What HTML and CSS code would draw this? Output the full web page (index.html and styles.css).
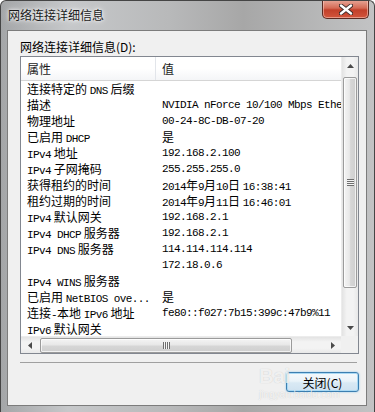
FILE: index.html
```html
<!DOCTYPE html>
<html lang="zh-CN">
<head>
    <meta charset="UTF-8">
    <meta name="viewport" content="width=device-width, initial-scale=1.0">
    <title>网络连接详细信息</title>
    <link rel="stylesheet" href="styles.css">
</head>
<body>

    <div class="window">
        <div class="titlebar">
            <span class="title">网络连接详细信息</span>
            <button class="close" aria-label="关闭">
                <svg width="14" height="11" viewBox="0 0 14 11">
                    <path d="M2 1.5 L12 9.5 M12 1.5 L2 9.5" stroke="#3a2a28" stroke-width="4.2" stroke-linecap="round"/>
                    <path d="M2 1.5 L12 9.5 M12 1.5 L2 9.5" stroke="#fff" stroke-width="2.4" stroke-linecap="round"/>
                </svg>
            </button>
        </div>

        <div class="client">
            <div class="label">网络连接详细信息(D):</div>

            <div class="listbox">
                <div class="list">
                    <div class="head">
                        <div class="col1">属性</div>
                        <div class="col2">值</div>
                    </div>
                    <div class="row"><div class="col1">连接特定的 <span class="en">DNS</span> 后缀</div><div class="col2"></div></div>
                    <div class="row"><div class="col1">描述</div><div class="col2 en">NVIDIA nForce 10/100 Mbps Ethernet</div></div>
                    <div class="row"><div class="col1">物理地址</div><div class="col2 en">00-24-8C-DB-07-20</div></div>
                    <div class="row"><div class="col1">已启用 <span class="en">DHCP</span></div><div class="col2">是</div></div>
                    <div class="row"><div class="col1"><span class="en">IPv4</span> 地址</div><div class="col2 en">192.168.2.100</div></div>
                    <div class="row"><div class="col1"><span class="en">IPv4</span> 子网掩码</div><div class="col2 en">255.255.255.0</div></div>
                    <div class="row"><div class="col1">获得租约的时间</div><div class="col2"><span class="en">2014</span>年<span class="en">9</span>月<span class="en">10</span>日 <span class="en">16:38:41</span></div></div>
                    <div class="row"><div class="col1">租约过期的时间</div><div class="col2"><span class="en">2014</span>年<span class="en">9</span>月<span class="en">11</span>日 <span class="en">16:46:01</span></div></div>
                    <div class="row"><div class="col1"><span class="en">IPv4</span> 默认网关</div><div class="col2 en">192.168.2.1</div></div>
                    <div class="row"><div class="col1"><span class="en">IPv4 DHCP</span> 服务器</div><div class="col2 en">192.168.2.1</div></div>
                    <div class="row"><div class="col1"><span class="en">IPv4 DNS</span> 服务器</div><div class="col2 en">114.114.114.114</div></div>
                    <div class="row"><div class="col1"></div><div class="col2 en">172.18.0.6</div></div>
                    <div class="row"><div class="col1"><span class="en">IPv4 WINS</span> 服务器</div><div class="col2"></div></div>
                    <div class="row"><div class="col1">已启用 <span class="en">NetBIOS ove...</span></div><div class="col2">是</div></div>
                    <div class="row"><div class="col1">连接<span class="en">-</span>本地 <span class="en">IPv6</span> 地址</div><div class="col2 en">fe80::f027:7b15:399c:47b9%11</div></div>
                    <div class="row"><div class="col1"><span class="en">IPv6</span> 默认网关</div><div class="col2"></div></div>
                </div>

                <div class="vscroll">
                    <div class="arrow">
                        <svg width="7" height="4" viewBox="0 0 7 4"><polygon points="0,4 7,4 3.5,0" fill="#4a4a4a"/></svg>
                    </div>
                    <div class="vtrack">
                        <div class="vthumb"><span class="grip-v"></span></div>
                    </div>
                    <div class="arrow">
                        <svg width="7" height="4" viewBox="0 0 7 4"><polygon points="0,0 7,0 3.5,4" fill="#4a4a4a"/></svg>
                    </div>
                </div>

                <div class="hscroll">
                    <div class="arrow">
                        <svg width="4" height="7" viewBox="0 0 4 7"><polygon points="4,0 4,7 0,3.5" fill="#4a4a4a"/></svg>
                    </div>
                    <div class="htrack">
                        <div class="hthumb"><span class="grip-h"></span></div>
                    </div>
                    <div class="arrow">
                        <svg width="4" height="7" viewBox="0 0 4 7"><polygon points="0,0 0,7 4,3.5" fill="#4a4a4a"/></svg>
                    </div>
                </div>

                <div class="corner"></div>
            </div>

            <div class="sep"></div>

            <div class="buttons">
                <button class="btn">关闭(C)</button>
            </div>
        </div>

        <!-- watermark from the screenshot source -->
        <div class="watermark">
            <span class="wm-big">Bai</span>
            <span class="wm-small">jingyan.baidu.com</span>
        </div>
    </div>

</body>
</html>
```

FILE: styles.css
```css
body {
    margin: 0;
    font-family: "Noto Sans CJK SC", sans-serif;
    font-size: 12px;
    color: #000;
    background: #fff;
}

.window {
    position: relative;
    width: 375px;
    height: 412px;
    box-sizing: border-box;
    display: flex;
    flex-direction: column;
    padding: 0 7px 6px 6px;
    border: 1px solid #454545;
    border-bottom: none;
    border-radius: 6px 6px 0 0;
    background: linear-gradient(to right, #a4a6a8, #c6c8ca 18%, #b8b9ba 45%, #a7a7a7 65%, #c2c3c4);
    overflow: hidden;
}

.titlebar {
    height: 29px;
    display: flex;
    justify-content: space-between;
    align-items: flex-start;
}

.title {
    margin: 6px 0 0 1px;
    line-height: 16px;
    color: #1a1a1a;
    text-shadow: 0 0 6px #fff, 0 0 3px #fff;
}

.close {
    width: 47px;
    height: 19px;
    margin: -1px -2px 0 0;
    padding: 0;
    border: 1px solid #5a2a22;
    border-top: none;
    border-radius: 0 0 5px 5px;
    background: linear-gradient(#e8a899, #d46a55 45%, #c2402a 55%, #d2553c);
    box-shadow: inset 0 0 0 1px rgba(255, 220, 210, 0.5);
    display: flex;
    align-items: center;
    justify-content: center;
}

.client {
    flex: 1;
    display: flex;
    flex-direction: column;
    padding: 9px 7px 0 12px;
    border: 1px solid #7c7c7c;
    background: #f0f0f0;
}

.label {
    line-height: 14px;
    height: 14px;
    margin-bottom: 2px;
    color: #000;
}

.listbox {
    height: 298px;
    box-sizing: border-box;
    border: 1px solid #828790;
    background: #fff;
    display: grid;
    grid-template-columns: 1fr 17px;
    grid-template-rows: 1fr 17px;
}

.list {
    overflow: hidden;
    white-space: nowrap;
}

.head {
    height: 23px;
    display: flex;
    align-items: center;
    border-bottom: 1px solid #d5d5d5;
    background: linear-gradient(#fff, #fff 50%, #f4f5f7);
    color: #1b1b1b;
}

.head .col1 {
    width: 128px;
    height: 100%;
    display: flex;
    align-items: center;
    padding-left: 6px;
    border-right: 1px solid #e2e5ea;
}

.head .col2 {
    padding-left: 6px;
}

.row {
    display: flex;
    height: 16px;
    line-height: 16px;
}

.row:first-of-type {
    margin-top: 1px;
}

.row .col1 {
    width: 135px;
    padding-left: 6px;
    box-sizing: border-box;
    flex-shrink: 0;
}

.row .col2 {
    padding-left: 6px;
}

.en {
    font-family: "Liberation Mono", monospace;
    font-size: 11px;
    letter-spacing: -0.6px;
}

.vscroll {
    display: flex;
    flex-direction: column;
    background: linear-gradient(to right, #e3e3e3, #f3f3f3 30%, #f3f3f3 70%, #e8e8e8);
    border-left: 1px solid #ececec;
}

.vscroll .arrow,
.hscroll .arrow {
    width: 17px;
    height: 17px;
    flex-shrink: 0;
    display: flex;
    align-items: center;
    justify-content: center;
}

.vtrack {
    flex: 1;
    padding-top: 3px;
}

.vthumb {
    height: 209px;
    margin: 0 1px;
    border: 1px solid #9b9b9b;
    border-radius: 2px;
    background: linear-gradient(to right, #f4f4f4, #e8e8e8 45%, #d6d6d6 55%, #cfcfcf);
    box-shadow: inset 0 0 0 1px rgba(255, 255, 255, 0.7);
    display: flex;
    align-items: center;
    justify-content: center;
}

.grip-v {
    width: 7px;
    height: 7px;
    background: repeating-linear-gradient(#6e6e6e 0, #6e6e6e 1px, #f4f4f4 1px, #f4f4f4 2px);
}

.hscroll {
    display: flex;
    background: linear-gradient(#e3e3e3, #f3f3f3 30%, #f3f3f3 70%, #e8e8e8);
    border-top: 1px solid #ececec;
}

.htrack {
    flex: 1;
    padding-left: 2px;
}

.hthumb {
    width: 250px;
    height: 13px;
    margin-top: 1px;
    border: 1px solid #9b9b9b;
    border-radius: 2px;
    background: linear-gradient(#f4f4f4, #e8e8e8 45%, #d6d6d6 55%, #cfcfcf);
    box-shadow: inset 0 0 0 1px rgba(255, 255, 255, 0.7);
    display: flex;
    align-items: center;
    justify-content: center;
}

.grip-h {
    width: 7px;
    height: 7px;
    background: repeating-linear-gradient(to right, #6e6e6e 0, #6e6e6e 1px, #f4f4f4 1px, #f4f4f4 2px);
}

.corner {
    background: #f0f0f0;
}

.sep {
    height: 1px;
    margin: 8px 2px 0 0;
    background: #a0a0a0;
}

.buttons {
    display: flex;
    justify-content: flex-end;
    margin-top: 9px;
}

.btn {
    width: 73px;
    height: 20px;
    padding: 0;
    font-family: "Noto Sans CJK SC", sans-serif;
    font-size: 12px;
    color: #000;
    border: 1px solid #3c7fb1;
    border-radius: 3px;
    background: linear-gradient(#f4f9fc, #eaf3f9 45%, #d9e9f4 55%, #cfe2f0);
    box-shadow: inset 0 0 0 1px #a9d9f4, 0 0 2px #7ec2ec;
}

.watermark {
    position: absolute;
    left: 258px;
    top: 364px;
    display: flex;
    flex-direction: column;
    pointer-events: none;
}

.wm-big {
    font-family: "Liberation Sans", sans-serif;
    font-weight: bold;
    font-size: 20px;
    line-height: 22px;
    color: rgba(255, 255, 255, 0.75);
    text-shadow: 0 0 1px rgba(0, 0, 0, 0.2);
}

.wm-small {
    font-family: "Liberation Sans", sans-serif;
    font-size: 10px;
    line-height: 12px;
    margin-top: 2px;
    color: rgba(255, 255, 255, 0.8);
    text-shadow: 0 0 1px rgba(0, 0, 0, 0.2);
}
```
